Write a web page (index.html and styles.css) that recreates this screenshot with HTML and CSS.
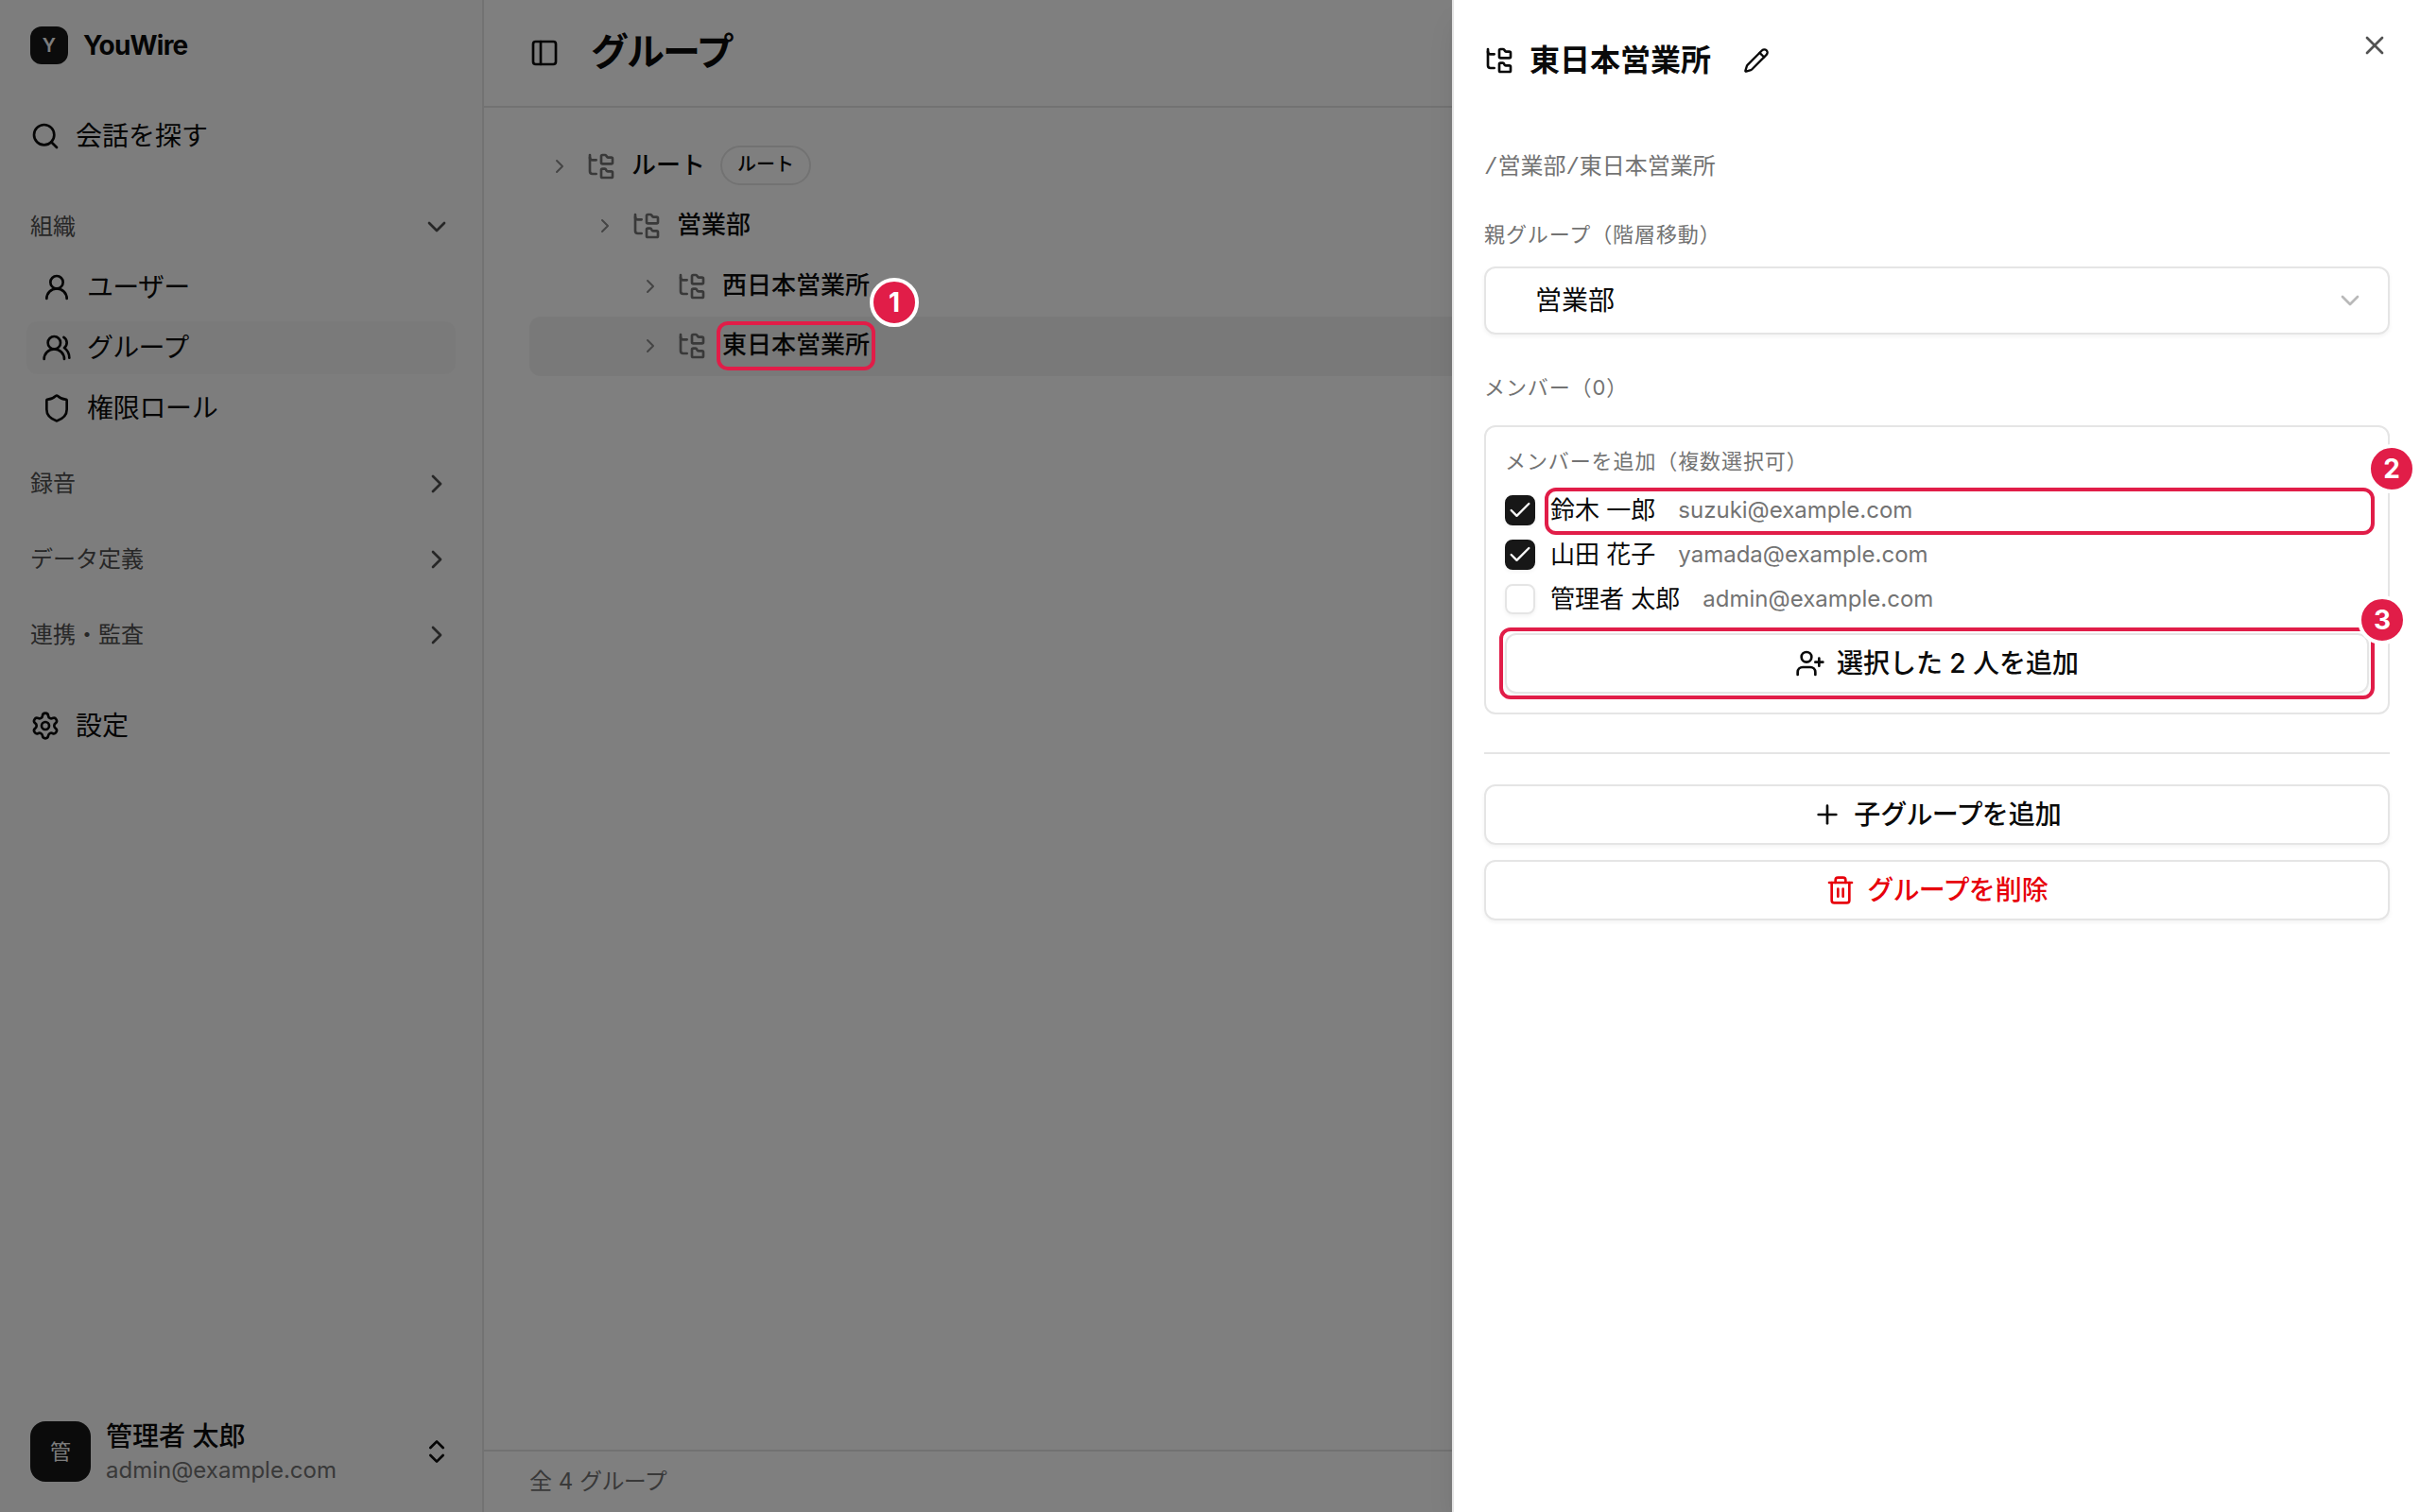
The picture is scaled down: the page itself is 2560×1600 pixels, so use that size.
FILE: index.html
```html
<!DOCTYPE html>
<html lang="ja">
<head>
<meta charset="utf-8">
<title>YouWire - グループ</title>
<link rel="stylesheet" href="styles.css">
</head>
<body>
<svg class="sprite" aria-hidden="true">
  <symbol id="search" viewBox="0 0 24 24"><path d="m21 21-4.34-4.34"/><circle cx="11" cy="11" r="8"/></symbol>
  <symbol id="down" viewBox="0 0 24 24"><path d="m6 9 6 6 6-6"/></symbol>
  <symbol id="right" viewBox="0 0 24 24"><path d="m9 18 6-6-6-6"/></symbol>
  <symbol id="updown" viewBox="0 0 24 24"><path d="m7 15 5 5 5-5"/><path d="m7 9 5-5 5 5"/></symbol>
  <symbol id="user" viewBox="0 0 24 24"><circle cx="12" cy="8" r="5"/><path d="M20 21a8 8 0 0 0-16 0"/></symbol>
  <symbol id="users" viewBox="0 0 24 24"><path d="M18 21a8 8 0 0 0-16 0"/><circle cx="10" cy="8" r="5"/><path d="M22 20c0-3.37-2-6.5-4-8a5 5 0 0 0-.45-8.3"/></symbol>
  <symbol id="shield" viewBox="0 0 24 24"><path d="M20 13c0 5-3.5 7.5-7.66 8.95a1 1 0 0 1-.67-.01C7.5 20.5 4 18 4 13V6a1 1 0 0 1 1-1c2 0 4.5-1.2 6.24-2.72a1.17 1.17 0 0 1 1.52 0C14.51 3.81 17 5 19 5a1 1 0 0 1 1 1z"/></symbol>
  <symbol id="gear" viewBox="0 0 24 24"><path d="M9.671 4.136a2.34 2.34 0 0 1 4.659 0 2.34 2.34 0 0 0 3.319 1.915 2.34 2.34 0 0 1 2.33 4.033 2.34 2.34 0 0 0 0 3.831 2.34 2.34 0 0 1-2.33 4.033 2.34 2.34 0 0 0-3.319 1.915 2.34 2.34 0 0 1-4.659 0 2.34 2.34 0 0 0-3.32-1.915 2.34 2.34 0 0 1-2.33-4.033 2.34 2.34 0 0 0 0-3.831A2.34 2.34 0 0 1 6.35 6.051a2.34 2.34 0 0 0 3.319-1.915"/><circle cx="12" cy="12" r="3"/></symbol>
  <symbol id="panel" viewBox="0 0 24 24"><rect width="18" height="18" x="3" y="3" rx="2"/><path d="M9 3v18"/></symbol>
  <symbol id="tree" viewBox="0 0 24 24"><path d="M20 10a1 1 0 0 0 1-1V6a1 1 0 0 0-1-1h-2.5a1 1 0 0 1-.8-.4l-.9-1.2A1 1 0 0 0 15 3h-2a1 1 0 0 0-1 1v5a1 1 0 0 0 1 1Z"/><path d="M20 21a1 1 0 0 0 1-1v-3a1 1 0 0 0-1-1h-2.9a1 1 0 0 1-.88-.55l-.42-.85a1 1 0 0 0-.92-.6H13a1 1 0 0 0-1 1v5a1 1 0 0 0 1 1Z"/><path d="M3 5a2 2 0 0 0 2 2h3"/><path d="M3 3v13a2 2 0 0 0 2 2h3"/></symbol>
  <symbol id="pencil" viewBox="0 0 24 24"><path d="M21.174 6.812a1 1 0 0 0-3.986-3.987L3.842 16.174a2 2 0 0 0-.5.83l-1.321 4.352a.5.5 0 0 0 .623.622l4.353-1.32a2 2 0 0 0 .83-.497z"/><path d="m15 5 4 4"/></symbol>
  <symbol id="close" viewBox="0 0 24 24"><path d="M18 6 6 18"/><path d="m6 6 12 12"/></symbol>
  <symbol id="check" viewBox="0 0 24 24"><path d="M20 6 9 17l-5-5"/></symbol>
  <symbol id="userplus" viewBox="0 0 24 24"><path d="M16 21v-2a4 4 0 0 0-4-4H6a4 4 0 0 0-4 4v2"/><circle cx="9" cy="7" r="4"/><path d="M19 8v6"/><path d="M22 11h-6"/></symbol>
  <symbol id="plus" viewBox="0 0 24 24"><path d="M5 12h14"/><path d="M12 5v14"/></symbol>
  <symbol id="trash" viewBox="0 0 24 24"><path d="M10 11v6"/><path d="M14 11v6"/><path d="M19 6v14a2 2 0 0 1-2 2H7a2 2 0 0 1-2-2V6"/><path d="M3 6h18"/><path d="M8 6V4a2 2 0 0 1 2-2h4a2 2 0 0 1 2 2v2"/></symbol>
</svg>

<div class="app">
  <aside class="sidebar">
    <div class="brand"><span class="logo">Y</span><span class="brand-name">YouWire</span></div>
    <nav class="nav">
      <a class="nav-item search"><svg class="icon"><use href="#search"/></svg>会話を探す</a>
      <div class="section open">組織<svg class="icon"><use href="#down"/></svg></div>
      <a class="nav-item sub"><svg class="icon"><use href="#user"/></svg><span class="kana">ユーザー</span></a>
      <a class="nav-item sub active"><svg class="icon"><use href="#users"/></svg><span class="kana">グループ</span></a>
      <a class="nav-item sub last"><svg class="icon"><use href="#shield"/></svg>権限ロール</a>
      <div class="section">録音<svg class="icon"><use href="#right"/></svg></div>
      <div class="section">データ定義<svg class="icon"><use href="#right"/></svg></div>
      <div class="section">連携・監査<svg class="icon"><use href="#right"/></svg></div>
      <a class="nav-item settings"><svg class="icon"><use href="#gear"/></svg>設定</a>
    </nav>
    <div class="account">
      <span class="avatar">管</span>
      <div class="account-text"><div class="account-name">管理者 太郎</div><div class="account-mail">admin@example.com</div></div>
      <svg class="icon"><use href="#updown"/></svg>
    </div>
  </aside>

  <main class="main">
    <header class="header"><svg class="icon"><use href="#panel"/></svg><h1>グループ</h1></header>
    <div class="tree">
      <div class="row"><svg class="icon caret"><use href="#right"/></svg><svg class="icon folder"><use href="#tree"/></svg><span class="name">ルート</span><span class="badge">ルート</span></div>
      <div class="row level-1"><svg class="icon caret"><use href="#right"/></svg><svg class="icon folder"><use href="#tree"/></svg><span class="name">営業部</span></div>
      <div class="row level-2"><svg class="icon caret"><use href="#right"/></svg><svg class="icon folder"><use href="#tree"/></svg><span class="name">西日本営業所</span></div>
      <div class="row level-2 selected"><svg class="icon caret"><use href="#right"/></svg><svg class="icon folder"><use href="#tree"/></svg><span class="name">東日本営業所</span></div>
    </div>
    <footer class="footer">全 4 <span class="kana">グループ</span></footer>
  </main>
</div>

<div class="overlay"></div>

<section class="drawer">
  <div class="drawer-head"><svg class="icon"><use href="#tree"/></svg><h2>東日本営業所</h2><svg class="icon edit"><use href="#pencil"/></svg></div>
  <svg class="icon close"><use href="#close"/></svg>
  <div class="path">/営業部/東日本営業所</div>
  <div class="label">親グループ（階層移動）</div>
  <div class="select"><span>営業部</span><svg class="icon"><use href="#down"/></svg></div>
  <div class="label members-label">メンバー（0）</div>
  <div class="card">
    <div class="label">メンバーを追加（複数選択可）</div>
    <div class="member"><span class="checkbox checked"><svg class="icon"><use href="#check"/></svg></span><span>鈴木 一郎</span><span class="mail">suzuki@example.com</span></div>
    <div class="member second"><span class="checkbox checked"><svg class="icon"><use href="#check"/></svg></span><span>山田 花子</span><span class="mail">yamada@example.com</span></div>
    <div class="member"><span class="checkbox"></span><span>管理者 太郎</span><span class="mail">admin@example.com</span></div>
    <div class="button add"><svg class="icon"><use href="#userplus"/></svg>選択した 2 人を追加</div>
  </div>
  <div class="actions">
    <div class="button"><svg class="icon"><use href="#plus"/></svg><span>子<span class="kana">グループ</span>を追加</span></div>
    <div class="button danger"><svg class="icon"><use href="#trash"/></svg><span><span class="kana">グループ</span>を削除</span></div>
  </div>
</section>

<div class="frame frame-1"></div><div class="pin pin-1">1</div>
<div class="frame frame-2"></div><div class="pin pin-2">2</div>
<div class="frame frame-3"></div><div class="pin pin-3">3</div>
</body>
</html>
```
FILE: styles.css
```css
* { box-sizing: border-box; }
body {
  margin: 0;
  width: 2560px;
  height: 1600px;
  overflow: hidden;
  position: relative;
  background: #fff;
  color: #0a0a0a;
  font-family: Inter, "Noto Sans CJK JP", sans-serif;
  font-size: 28px;
  line-height: 40px;
}
h1, h2 { margin: 0; font-weight: 600; }
.sprite { display: none; }
.icon {
  width: 32px;
  height: 32px;
  flex: none;
  fill: none;
  stroke: currentColor;
  stroke-width: 2;
  stroke-linecap: round;
  stroke-linejoin: round;
}
.kana { letter-spacing: -0.025em; }
.app { display: flex; height: 1600px; }

/* Sidebar */
.sidebar {
  width: 512px;
  flex: none;
  display: flex;
  flex-direction: column;
  background: #fafafa;
  border-right: 2px solid #e5e5e5;
}
.brand { display: flex; align-items: center; gap: 16px; padding: 28px 32px 0; height: 68px; }
.logo {
  width: 40px;
  height: 40px;
  border-radius: 12px;
  background: #171717;
  color: #fafafa;
  font-size: 20px;
  font-weight: 600;
  line-height: 40px;
  text-align: center;
}
.brand-name { font-weight: 700; letter-spacing: -0.8px; }
.nav { flex: 1; padding: 44px 28px 0; }
.nav-item { display: flex; align-items: center; gap: 16px; height: 64px; padding: 0 4px; }
.nav-item.sub { height: 56px; margin-bottom: 8px; padding: 0 16px; border-radius: 12px; }
.nav-item.sub.last { margin-bottom: 20px; letter-spacing: -0.3px; }
.nav-item.active { background: #f5f5f5; }
.section {
  display: flex;
  align-items: center;
  justify-content: space-between;
  height: 64px;
  margin-bottom: 16px;
  padding: 0 4px;
  color: #4f4f4f;
  font-size: 24px;
}
.section.open { margin: 32px 0 4px; }
.nav-item.settings { margin-top: 32px; }
.account { display: flex; align-items: center; gap: 16px; height: 128px; padding: 0 32px; }
.avatar {
  width: 64px;
  height: 64px;
  border-radius: 16px;
  background: #171717;
  color: #fafafa;
  font-size: 22px;
  line-height: 64px;
  text-align: center;
}
.account-text { flex: 1; padding-top: 3px; }
.account-name { font-weight: 500; line-height: 36px; }
.account-mail { color: #737373; font-size: 24px; line-height: 36px; }

/* Main column */
.main { flex: 1; display: flex; flex-direction: column; }
.header {
  display: flex;
  align-items: center;
  gap: 33px;
  height: 114px;
  padding: 0 48px;
  border-bottom: 2px solid #e5e5e5;
}
.header h1 { padding-bottom: 3px; font-size: 40px; line-height: 56px; letter-spacing: -2px; }
.tree { flex: 1; padding: 30px 48px; }
.row {
  display: flex;
  align-items: center;
  gap: 16px;
  height: 63.5px;
  padding-left: 20px;
  border-radius: 12px;
  font-size: 26px;
}
.level-1 { padding-left: 68px; }
.level-2 { padding-left: 116px; }
.selected { background: #f2f2f2; }
.name { font-weight: 450; padding-bottom: 2px; }
.caret { width: 24px; height: 24px; color: #8a8a8a; }
.folder { color: #737373; }
.badge {
  height: 42px;
  margin-bottom: 2px;
  padding: 0 16px;
  border: 2px solid #e5e5e5;
  border-radius: 21px;
  font-size: 20px;
  font-weight: 450;
  line-height: 37px;
}
.footer {
  height: 66px;
  padding: 0 48px;
  border-top: 2px solid #e5e5e5;
  color: #737373;
  font-size: 24px;
  line-height: 63px;
}

.overlay { position: absolute; inset: 0; background: rgba(0, 0, 0, 0.5); }

/* Drawer */
.drawer {
  position: absolute;
  top: 0;
  right: 0;
  width: 1024px;
  height: 1600px;
  padding: 32px 32px 0;
  background: #fff;
  border-left: 2px solid #e5e5e5;
  box-shadow: 0 20px 30px -6px rgba(0, 0, 0, 0.1), 0 8px 12px -8px rgba(0, 0, 0, 0.1);
}
.drawer-head { display: flex; align-items: center; gap: 16px; height: 64px; }
.drawer-head h2 { font-size: 32px; line-height: 48px; }
.edit { width: 28px; height: 28px; margin-left: 18px; }
.close { position: absolute; top: 32px; right: 32px; color: #525252; }
.path {
  margin-top: 62px;
  color: #737373;
  font-family: "Liberation Mono", "Noto Sans CJK JP", monospace;
  font-size: 24px;
  line-height: 40px;
}
.label {
  margin-top: 34px;
  color: #737373;
  font-size: 22px;
  letter-spacing: 0.9px;
  line-height: 32px;
}
.select {
  display: flex;
  align-items: center;
  justify-content: space-between;
  height: 72px;
  margin-top: 18px;
  padding: 0 24px 0 52px;
  border: 2px solid #e5e5e5;
  border-radius: 12px;
  box-shadow: 0 2px 4px rgba(0, 0, 0, 0.05);
}
.select .icon { color: #b9b9b9; }
.members-label { margin-top: 40px; }
.card {
  height: 306px;
  margin-top: 24px;
  padding: 20px;
  border: 2px solid #e5e5e5;
  border-radius: 12px;
}
.card .label { margin: 0 0 12px; }
.member {
  display: flex;
  align-items: center;
  height: 47px;
  font-size: 26px;
}
.member.second { padding-top: 1px; }
.checkbox {
  display: flex;
  align-items: center;
  justify-content: center;
  width: 32px;
  height: 32px;
  margin-right: 16px;
  border: 2px solid #e5e5e5;
  border-radius: 8px;
  box-shadow: 0 2px 4px rgba(0, 0, 0, 0.05);
}
.checkbox.checked { background: #171717; border-color: #171717; color: #fafafa; }
.checkbox .icon { width: 28px; height: 28px; }
.mail { margin-left: 24px; color: #737373; font-size: 24px; }
.button {
  display: flex;
  align-items: center;
  justify-content: center;
  gap: 12px;
  height: 64px;
  border: 2px solid #e5e5e5;
  border-radius: 12px;
  box-shadow: 0 2px 4px rgba(0, 0, 0, 0.05);
  font-weight: 500;
}
.add { margin-top: 13px; }
.actions {
  display: flex;
  flex-direction: column;
  gap: 16px;
  margin-top: 40px;
  padding-top: 32px;
  border-top: 2px solid #e5e5e5;
}
.danger { color: #e7000b; }

/* Numbered callouts over the page */
.frame { position: absolute; border: 4px solid #e11d48; border-radius: 12px; }
.pin {
  position: absolute;
  width: 52px;
  height: 52px;
  border: 4px solid #fff;
  border-radius: 50%;
  background: #e11d48;
  color: #fff;
  font-size: 28px;
  font-weight: 700;
  line-height: 44px;
  text-align: center;
}
.frame-1 { left: 758px; top: 340px; width: 168px; height: 52px; }
.frame-2 { left: 1634px; top: 516px; width: 878px; height: 50px; }
.frame-3 { left: 1586px; top: 664px; width: 926px; height: 76px; }
.pin-1 { left: 920px; top: 294px; }
.pin-2 { left: 2504px; top: 470px; }
.pin-3 { left: 2494px; top: 630px; }
```
